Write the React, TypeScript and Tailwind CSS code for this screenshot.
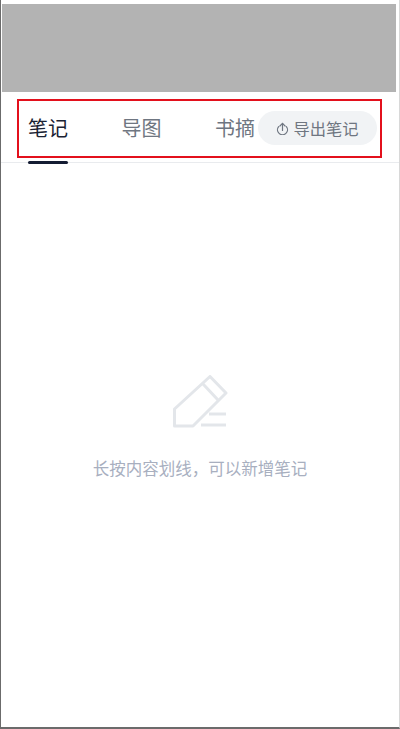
const font = { fontFamily: '"Noto Sans CJK SC", "Liberation Sans", sans-serif' };

function Tab({ label, active }: { label: string; active?: boolean }) {
  return (
    <div className="relative flex w-10 justify-center">
      <span className={`whitespace-nowrap text-[20px] leading-[28px] ${active ? 'text-[#1a2233]' : 'text-[#6f7681]'}`}>{label}</span>
      {active && <div className="absolute left-0 top-[47px] h-[3px] w-10 rounded-sm bg-[#141c33]" />}
    </div>
  );
}

export default function App() {
  return (
    <div style={font} className="flex h-[729px] w-[400px] flex-col overflow-hidden border-b-2 border-l border-r border-b-[#6b6b6b] border-l-[#6b6b6b] border-r-[#d8d8d8] bg-white">
      {/* grey top */}
      <div className="mt-[4px] mr-[3px] ml-[1px] h-[88px] shrink-0 bg-[#b3b3b3]" />

      {/* tabs */}
      <div className="relative h-[71px] shrink-0 border-b border-[#e9ebee]">
        <div className="flex items-center gap-[53.5px] pl-[27px] pt-[22px]">
          <Tab label="笔记" active />
          <Tab label="导图" />
          <Tab label="书摘" />
        </div>

        <div className="absolute left-[257px] top-[19px] flex h-[34px] w-[119px] items-center justify-center gap-[4px] rounded-full bg-[#f1f3f5]">
          <svg width="13" height="13" viewBox="0 0 13 13" fill="none" stroke="#6f7681" strokeWidth="1.2" strokeLinecap="round" strokeLinejoin="round">
            <path d="M2.6 4.6a5 5 0 1 0 7.8 0" />
            <path d="M6.5 8.4V1.4" />
            <path d="M3.9 4 6.5 1.4 9.1 4" />
          </svg>
          <span className="whitespace-nowrap text-[16.3px] leading-5 text-[#6f7681]">导出笔记</span>
        </div>

        {/* red highlight box */}
        <div className="absolute left-[16px] top-[7px] h-[59px] w-[365px] border-2 border-[#e3101c]" />
      </div>

      {/* empty state */}
      <div className="flex flex-col items-center pt-[212px]">
        <svg width="55" height="53" viewBox="0 0 55 53" fill="none" stroke="#e3e6ea" strokeWidth="3" strokeLinejoin="round" strokeLinecap="butt">
          <path d="M1.5 51V34L37 1.5 53 18 20 51Z" />
          <path d="M30 9 46 26" />
          <path d="M36 39H53" />
          <path d="M28 50H53" />
        </svg>
        <p className="mt-[28px] whitespace-nowrap text-[16.5px] leading-6 text-[#a8afbf]">长按内容划线，可以新增笔记</p>
      </div>
    </div>
  );
}
